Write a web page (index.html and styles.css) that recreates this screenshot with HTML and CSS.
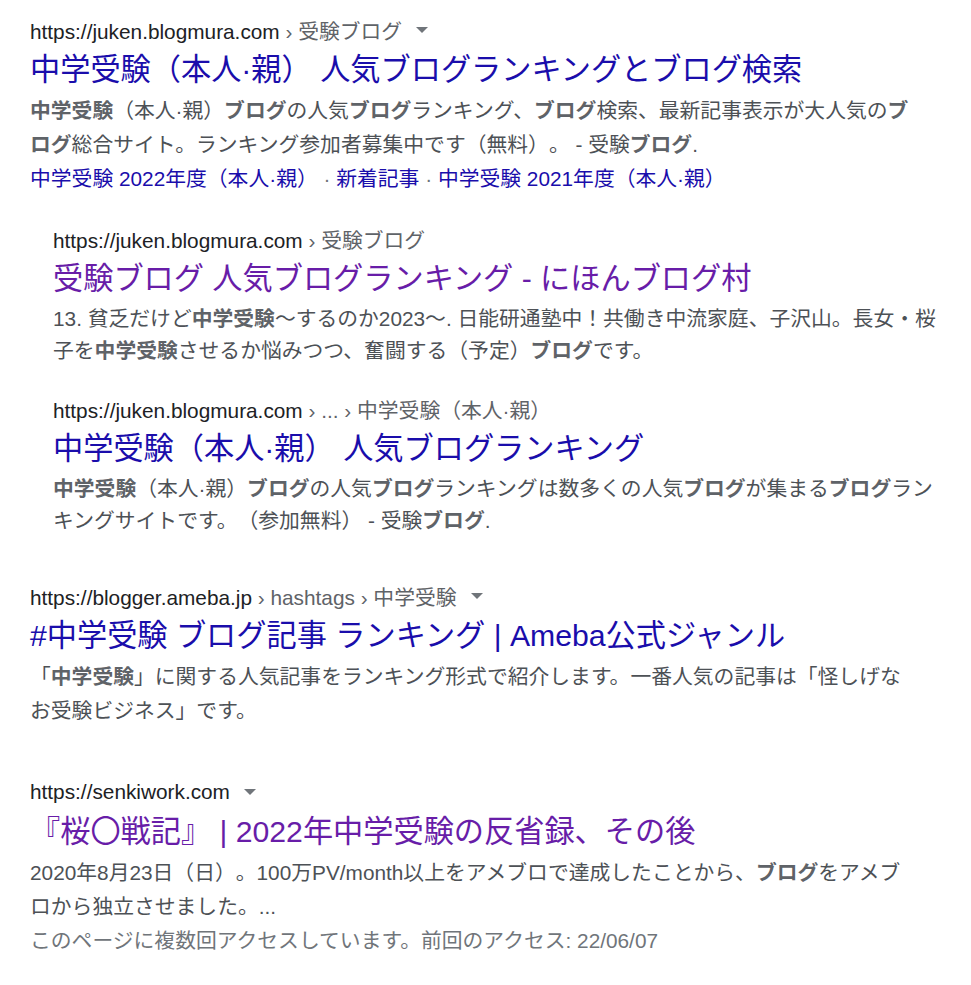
FILE: index.html
```html
<!DOCTYPE html>
<html lang="ja">
<head>
    <meta charset="UTF-8">
    <meta name="viewport" content="width=device-width, initial-scale=1.0">
    <title>中学受験 ブログ - 検索結果</title>
    <link rel="stylesheet" href="styles.css">
</head>
<body>

    <div id="results">

        <!-- 1件目 + 同じサイトの関連結果 -->
        <div class="result grouped">
            <div class="url">
                <cite>https://juken.blogmura.com<span class="crumb"> › 受験ブログ</span></cite>
                <svg class="more" viewBox="0 0 10 5"><path d="M0 0l5 5 5-5z"></path></svg>
            </div>
            <h3 class="title"><a href="#">中学受験（本人·親） 人気ブログランキングとブログ検索</a></h3>
            <div class="snippet"><b>中学受験</b>（本人·親）<b>ブログ</b>の人気<b>ブログ</b>ランキング、<b>ブログ</b>検索、最新記事表示が大人気の<b>ブログ</b>総合サイト。ランキング参加者募集中です（無料）。 - 受験<b>ブログ</b>.</div>
            <div class="sitelinks">
                <a href="#">中学受験 2022年度（本人·親）</a><span class="dot"> · </span><a href="#">新着記事</a><span class="dot"> · </span><a href="#">中学受験 2021年度（本人·親）</a>
            </div>

            <div class="sub">
                <div class="result">
                    <div class="url">
                        <cite>https://juken.blogmura.com<span class="crumb"> › 受験ブログ</span></cite>
                    </div>
                    <h3 class="title visited"><a href="#">受験ブログ 人気ブログランキング - にほんブログ村</a></h3>
                    <div class="snippet">13. 貧乏だけど<b>中学受験</b>〜するのか2023〜. 日能研通塾中！共働き中流家庭、子沢山。長女・桜子を<b>中学受験</b>させるか悩みつつ、奮闘する（予定）<b>ブログ</b>です。</div>
                </div>
                <div class="result">
                    <div class="url">
                        <cite>https://juken.blogmura.com<span class="crumb"> › ... › 中学受験（本人·親）</span></cite>
                    </div>
                    <h3 class="title"><a href="#">中学受験（本人·親） 人気ブログランキング</a></h3>
                    <div class="snippet"><b>中学受験</b>（本人·親）<b>ブログ</b>の人気<b>ブログ</b>ランキングは数多くの人気<b>ブログ</b>が集まる<b>ブログ</b>ランキングサイトです。（参加無料） - 受験<b>ブログ</b>.</div>
                </div>
            </div>
        </div>

        <div class="result">
            <div class="url">
                <cite>https://blogger.ameba.jp<span class="crumb"> › hashtags › 中学受験</span></cite>
                <svg class="more" viewBox="0 0 10 5"><path d="M0 0l5 5 5-5z"></path></svg>
            </div>
            <h3 class="title"><a href="#">#中学受験 ブログ記事 ランキング | Ameba公式ジャンル</a></h3>
            <div class="snippet">「<b>中学受験</b>」に関する人気記事をランキング形式で紹介します。一番人気の記事は「怪しげなお受験ビジネス」です。</div>
        </div>

        <div class="result">
            <div class="url">
                <cite>https://senkiwork.com</cite>
                <svg class="more" viewBox="0 0 10 5"><path d="M0 0l5 5 5-5z"></path></svg>
            </div>
            <h3 class="title visited"><a href="#">『桜〇戦記』 | 2022年中学受験の反省録、その後</a></h3>
            <div class="snippet">2020年8月23日（日）。100万PV/month以上をアメブロで達成したことから、<b>ブログ</b>をアメブロから独立させました。...</div>
            <div class="note">このページに複数回アクセスしています。前回のアクセス: 22/06/07</div>
        </div>

    </div>

</body>
</html>
```

FILE: styles.css
```css
body { margin: 0; padding: 15px 0 0 30px; background: #fff; font-family: "Liberation Sans", Arial, "Noto Sans CJK JP", sans-serif; color: #4d5156; text-spacing-trim: space-all; }
.result { margin-bottom: 49px; }
.result.grouped { margin-bottom: 44px; }
.url { display: flex; align-items: center; height: 30px; font-size: 20.8px; }
cite { font-style: normal; color: #202124; white-space: nowrap; }
.crumb { color: #5f6368; }
.more { width: 12px; height: 6px; margin-left: 14px; fill: #70757a; }
.title { margin: 5px 0 4px; font-size: 30.2px; font-weight: normal; line-height: 40px; }
.title a { color: #1a0dab; text-decoration: none; }
.title.visited a { color: #681da8; }
.snippet { max-width: 890px; font-size: 20.8px; line-height: 34px; }
.snippet b { color: #5f6368; }
.sitelinks { font-size: 20.8px; line-height: 33px; }
.sitelinks a { color: #1a0dab; text-decoration: none; }
.dot { color: #70757a; }
.note { font-size: 20.8px; line-height: 34px; color: #70757a; }
.sub { margin: 29px 0 0 23px; }
.sub .result { margin-bottom: 27px; }
.sub .result:last-child { margin-bottom: 0; }
.sub .snippet { line-height: 32px; }
```
